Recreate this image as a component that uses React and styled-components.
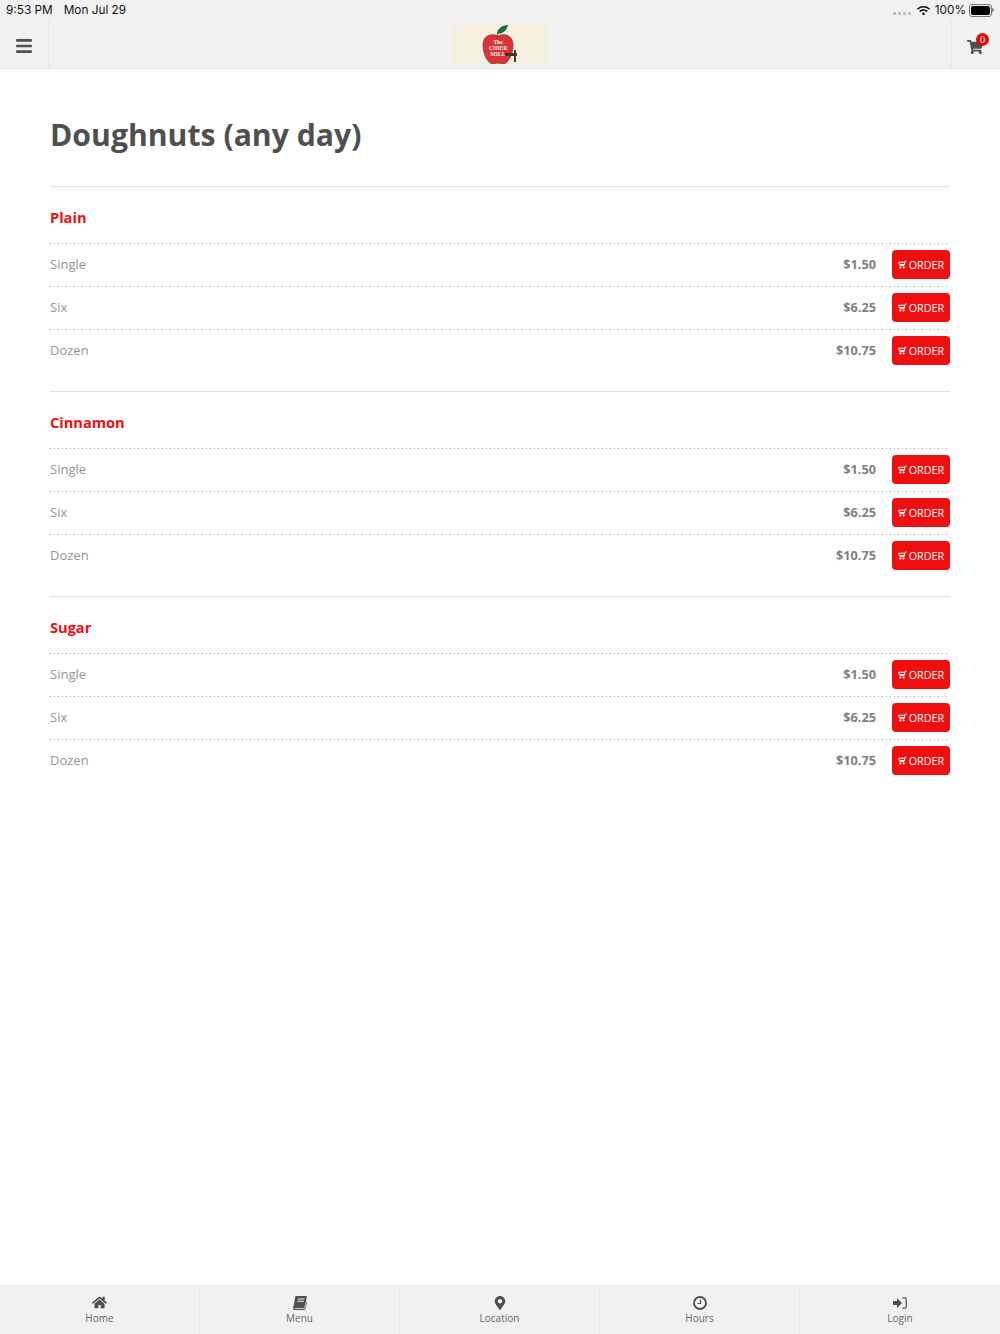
import React from 'react';
import styled, { createGlobalStyle } from 'styled-components';
import { FaBars, FaShoppingCart, FaHome, FaMapMarkerAlt, FaWifi } from 'react-icons/fa';

const Global = createGlobalStyle`
    html, body { margin: 0; padding: 0; background: #fff; }
    body { font-family: "Open Sans", "Liberation Sans", sans-serif; }
    #root { height: 1334px; }
`;

const Page = styled.div`
    height: 1334px;
    display: flex;
    flex-direction: column;
    overflow: hidden;
`;

const Top = styled.header`
    background: #f1f1f1;
    border-bottom: 1px solid #e4e4e4;
    flex: none;
`;

const StatusBar = styled.div`
    height: 20px;
    padding: 0 6px;
    display: flex;
    align-items: center;
    font-family: Inter, "Liberation Sans", sans-serif;
    font-size: 11.8px;
    color: #111;
`;

const StatusLeft = styled.div`
    display: flex;
    gap: 11px;
    flex: 1;
`;

const StatusRight = styled.div`
    display: flex;
    align-items: center;
`;

const Signal = styled.div`
    display: flex;
    gap: 2px;
    margin-right: 6px;
    margin-top: 6px;
`;

const SignalDot = styled.span`
    width: 3px;
    height: 3px;
    border-radius: 1px;
    background: #bcbcbc;
`;

const BatteryPercent = styled.span`
    margin-left: 5px;
`;

const Battery = styled.div`
    width: 19px;
    height: 9px;
    margin-left: 3px;
    margin-right: 2px;
    border: 1px solid #777;
    border-radius: 3px;
    padding: 1px;
    position: relative;
    &::before {
        content: '';
        display: block;
        width: 100%;
        height: 100%;
        border-radius: 2px;
        background: #000;
    }
    &::after {
        content: '';
        position: absolute;
        right: -3px;
        top: 3px;
        width: 2px;
        height: 4px;
        background: #888;
        border-radius: 0 2px 2px 0;
    }
`;

const NavBar = styled.div`
    height: 48px;
    display: grid;
    grid-template-columns: 49px 1fr 49px;
`;

const NavButton = styled.div`
    display: flex;
    align-items: center;
    justify-content: center;
    position: relative;
    box-sizing: border-box;
    padding-top: 4px;
    color: #4f4f4f;
    font-size: 18px;
    border-${props => props.side}: 1px solid #e4e4e4;
`;

const Badge = styled.span`
    position: absolute;
    top: 13px;
    right: 11px;
    width: 13px;
    height: 13px;
    border-radius: 50%;
    background: #e00d0d;
    color: #fff;
    font-size: 9px;
    line-height: 13px;
    text-align: center;
`;

const LogoWrap = styled.div`
    display: flex;
    justify-content: center;
    padding-top: 4px;
`;

const Logo = styled.svg`
    width: 98px;
    height: 40px;
    display: block;
`;

const Main = styled.main`
    flex: 1;
    padding: 0 50px;
`;

const Title = styled.h1`
    margin: 0;
    padding: 44px 0 29px;
    font-size: 30.2px;
    line-height: 44px;
    font-weight: 700;
    color: #505050;
    border-bottom: 1px solid #e2e2e2;
`;

const Section = styled.section`
    padding-bottom: 19px;
    border-bottom: ${props => props.last ? 'none' : '1px solid #e2e2e2'};
`;

const SectionName = styled.h2`
    margin: 0;
    padding: 19px 0 15px;
    height: 56px;
    box-sizing: border-box;
    font-size: 14.6px;
    line-height: 22px;
    font-weight: 700;
    color: #ee1010;
`;

const Row = styled.div`
    height: 43px;
    padding-bottom: 1px;
    box-sizing: border-box;
    background-image: linear-gradient(to right, #a0a0a0 1px, transparent 1px);
    background-size: 4px 1px;
    background-repeat: repeat-x;
    display: flex;
    align-items: center;
    font-size: 13px;
    color: #949494;
`;

const ItemName = styled.span`
    flex: 1;
`;

const Price = styled.span`
    font-weight: 700;
    font-size: 12.7px;
    color: #808080;
    margin-right: 16px;
`;

const OrderButton = styled.button`
    width: 58px;
    height: 29px;
    padding: 0;
    border: none;
    border-radius: 4px;
    background: #ee1010;
    color: #fff;
    font-family: inherit;
    font-size: 10.8px;
    display: flex;
    align-items: center;
    justify-content: center;
    gap: 2px;
`;

const Footer = styled.footer`
    flex: none;
    height: 49px;
    box-sizing: border-box;
    background: #f1f1f1;
    border-top: 1px solid #e4e4e4;
    display: flex;
`;

const Tab = styled.div`
    width: 200px;
    box-sizing: border-box;
    display: flex;
    flex-direction: column;
    align-items: center;
    padding-top: 9px;
    gap: 1px;
    color: #4f4f4f;
    border-right: ${props => props.last ? 'none' : '1px solid #e4e4e4'};
`;

const TabIcon = styled.div`
    height: 15px;
    font-size: ${props => props.size || 15}px;
    display: flex;
    align-items: center;
`;

const TabLabel = styled.span`
    font-size: 10px;
    line-height: 14px;
    color: #666;
`;

const CartIcon = () => (
    <svg width="9" height="9" viewBox="0 0 12 12" fill="none" stroke="#fff" strokeWidth="1.3">
        <path d="M11.5 1.5h-2l-1.300 6H2" />
        <path d="M9 3H.7l1 3H8.500" />
        <circle cx="7.500" cy="10" r="0.9" fill="#fff" />
        <circle cx="3" cy="10" r="0.9" fill="#fff" />
    </svg>
);

const BookIcon = () => (
    <svg width="14" height="14" viewBox="0 0 14 14">
        <path fill="#4f4f4f" d="M3.500 0H13c.7 0 1 .5.800 1.200L11.600 11c-.2.800-.7 1.200-1.400 1.200H2.500c-.6 0-.9.300-.8.700h9.400c.5 0 .8-.3 1-.8l2-8.400.5.400-2.100 9c-.2.600-.7 .9-1.300.9H1.500C.5 14 0 13.300 .1 12.400L2.200 1.200C2.400.5 2.800 0 3.500 0z" />
        <path fill="#f1f1f1" d="M5 2.500h6.500l-.2 1H4.800zM4.500 4.800H11l-.2 1H4.300z" />
    </svg>
);

const ClockIcon = () => (
    <svg width="14" height="14" viewBox="0 0 14 14" fill="none" stroke="#4f4f4f">
        <circle cx="7" cy="7" r="6" strokeWidth="1.800" />
        <path d="M7.500 3.500v4h-3" strokeWidth="1.200" />
    </svg>
);

const LoginIcon = () => (
    <svg width="14" height="12" viewBox="0 0 14 12">
        <path fill="#4f4f4f" d="M0 4h4V1l5 5-5 5V8H0z" />
        <path fill="none" stroke="#4f4f4f" strokeWidth="1.200" d="M9.500 .8h2.200c.8 0 1.500.7 1.500 1.500v7.400c0 .8-.7 1.500-1.500 1.500H9.500" />
    </svg>
);

const sections = ['Plain', 'Cinnamon', 'Sugar'];
const items = [
    { name: 'Single', price: '$1.50' },
    { name: 'Six', price: '$6.25' },
    { name: 'Dozen', price: '$10.75' },
];
const tabs = [
    { label: 'Home', icon: <FaHome /> },
    { label: 'Menu', icon: <BookIcon /> },
    { label: 'Location', icon: <FaMapMarkerAlt />, size: 14 },
    { label: 'Hours', icon: <ClockIcon /> },
    { label: 'Login', icon: <LoginIcon /> },
];

const App = () =>
    <Page>
        <Global />
        <Top>
            <StatusBar>
                <StatusLeft>
                    <span>9:53 PM</span>
                    <span>Mon Jul 29</span>
                </StatusLeft>
                <StatusRight>
                    <Signal>
                        <SignalDot /><SignalDot /><SignalDot /><SignalDot />
                    </Signal>
                    <FaWifi size={13} color="#111" />
                    <BatteryPercent>100%</BatteryPercent>
                    <Battery />
                </StatusRight>
            </StatusBar>
            <NavBar>
                <NavButton side="right"><FaBars /></NavButton>
                <LogoWrap>
                    <Logo viewBox="0 0 98 40">
                        <rect width="98" height="40" fill="#f4f0df" />
                        <path d="M47 12c-6-3-15-1-15 9 0 9 5 19 10 19 2 0 3-1 5-1s3 1 5 1c5 0 10-10 10-19 0-10-9-12-15-9z" fill="#d8343a" stroke="#8a3a3a" strokeWidth=".8" />
                        <path d="M46 10c0-5 5-9 11-9-1 5-5 9-11 9z" fill="#1f6b45" />
                        <path d="M47 9c-1 2-1 4 0 5" stroke="#5a3a2a" strokeWidth=".8" fill="none" />
                        <text x="47" y="20" fontSize="5.500" fontWeight="700" fill="#fbf1e2" textAnchor="middle" fontFamily="Liberation Serif, serif">The</text>
                        <text x="47" y="26" fontSize="5.800" fontWeight="700" fill="#fbf1e2" textAnchor="middle" fontFamily="Liberation Serif, serif">CIDER</text>
                        <text x="47" y="32" fontSize="5.800" fontWeight="700" fill="#fbf1e2" textAnchor="middle" fontFamily="Liberation Serif, serif">MILL</text>
                        <path d="M54 29h9v-3h2v3h1v3h-1v6h-2v-6h-9z" fill="#3f3830" />
                    </Logo>
                </LogoWrap>
                <NavButton side="left">
                    <FaShoppingCart style={{ fontSize: 16, marginTop: 1, marginRight: 2 }} />
                    <Badge>0</Badge>
                </NavButton>
            </NavBar>
        </Top>
        <Main>
            <Title>Doughnuts (any day)</Title>
            {sections.map((name, i) =>
                <Section key={name} last={i === sections.length - 1}>
                    <SectionName>{name}</SectionName>
                    {items.map(item =>
                        <Row key={item.name}>
                            <ItemName>{item.name}</ItemName>
                            <Price>{item.price}</Price>
                            <OrderButton><CartIcon />ORDER</OrderButton>
                        </Row>
                    )}
                </Section>
            )}
        </Main>
        <Footer>
            {tabs.map((tab, i) =>
                <Tab key={tab.label} last={i === tabs.length - 1}>
                    <TabIcon size={tab.size}>{tab.icon}</TabIcon>
                    <TabLabel>{tab.label}</TabLabel>
                </Tab>
            )}
        </Footer>
    </Page>;

export default App;
